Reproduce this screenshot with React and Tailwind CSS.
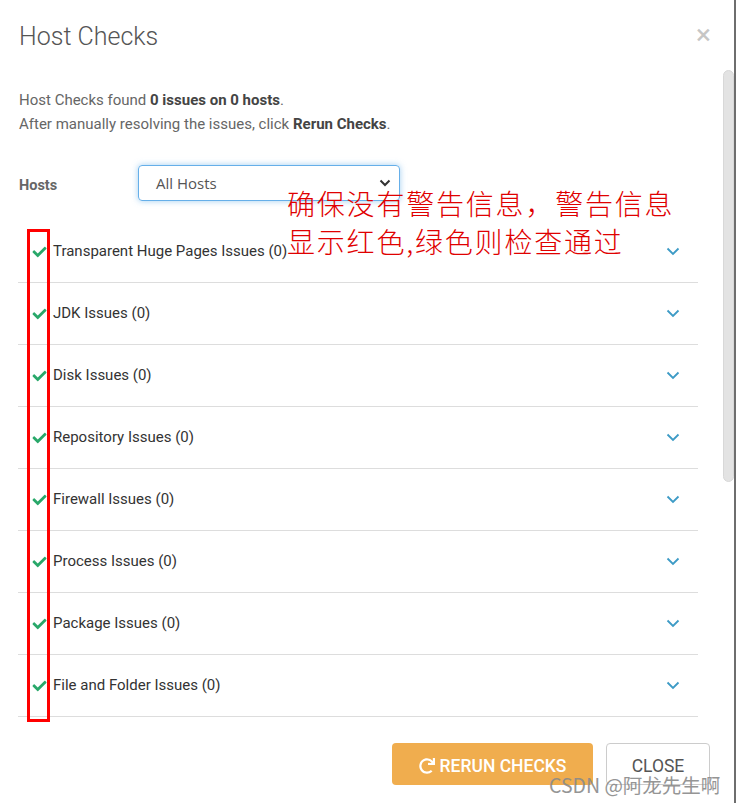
import React from "react";
import { FaCheck, FaRedo } from "react-icons/fa";

const rows = [
  "Transparent Huge Pages Issues (0)",
  "JDK Issues (0)",
  "Disk Issues (0)",
  "Repository Issues (0)",
  "Firewall Issues (0)",
  "Process Issues (0)",
  "Package Issues (0)",
  "File and Folder Issues (0)",
];

function Chevron() {
  return (
    <svg width="14" height="9" viewBox="0 0 14 9" className="shrink-0">
      <polyline points="1.5,1.5 7,7 12.5,1.5" fill="none" stroke="#3d9bc6" strokeWidth="1.8" />
    </svg>
  );
}

export default function App() {
  return (
    <div className="relative w-[736px] h-[803px] bg-white overflow-hidden flex font-['Roboto',sans-serif]">
      <div className="flex-1 flex flex-col">
        <div className="flex items-start justify-between pl-[19px] pr-[11px] pt-[21px]">
          <h1 className="text-[25px] leading-[32px] font-light text-[#555]">Host Checks</h1>
          <span className="text-[28px] leading-[24px] mt-[2px] text-[#c6c6c6]">×</span>
        </div>
        <div className="pl-[19px] pr-[24px] pt-[35px] text-[15px] leading-[24px] text-[#666]">
          <p>
            Host Checks found <b className="text-[#444] font-bold">0 issues on 0 hosts</b>.
          </p>
          <p>
            After manually resolving the issues, click <b className="text-[#444] font-bold">Rerun Checks</b>.
          </p>
        </div>
        <div className="flex items-center pl-[19px] pt-[29px]">
          <span className="w-[119px] text-[14.5px] font-bold text-[#666] mt-[6px]">Hosts</span>
          <div className="w-[262px] h-[36px] rounded-[4px] border border-[#66afe9] shadow-[0_0_6px_rgba(102,175,233,0.6)] flex items-center justify-between pl-[17px] pr-[8px]">
            <span className="text-[15px] text-[#555] font-['Open_Sans',sans-serif]">All Hosts</span>
            <svg width="12" height="8" viewBox="0 0 12 8">
              <polyline points="1.5,1.5 6,6 10.5,1.5" fill="none" stroke="#333" strokeWidth="2" />
            </svg>
          </div>
        </div>
        <div className="ml-[18px] mr-[24px] mt-[20px] flex flex-col">
          {rows.map((r) => (
            <div key={r} className="h-[62px] flex items-center border-b border-[#dddddd]">
              <FaCheck className="ml-[14px] mr-[6px] text-[#29a86a] w-[15px] h-[14px]" />
              <span className="flex-1 text-[15px] text-[#333]">{r}</span>
              <div className="mr-[18px]">
                <Chevron />
              </div>
            </div>
          ))}
        </div>
        <div className="flex justify-end gap-[13px] pr-[12px] mt-[26px]">
          <button className="w-[201px] h-[42px] pt-[4px] rounded-[4px] bg-[#f0ad4e] text-white text-[17.5px] font-medium flex items-center justify-center gap-[5px]">
            <FaRedo className="w-[16px] h-[16px]" />
            RERUN CHECKS
          </button>
          <button className="w-[104px] h-[42px] pt-[4px] rounded-[4px] border border-[#ccc] bg-white text-[#555] text-[17.5px] flex items-center justify-center">
            CLOSE
          </button>
        </div>
      </div>
      <div className="w-[14px] flex">
        <div className="w-[11px] ml-[1px] pt-[70px]">
          <div className="h-[412px] rounded-full bg-[#e3e3e3] border border-[#d8d8d8]" />
        </div>
        <div className="w-[2px] ml-auto bg-[#6e6e6e]" />
      </div>

      {/* annotation overlays */}
      <div className="absolute left-[27px] top-[229px] w-[23px] h-[493px] border-[3px] border-[#ff0000]" />
      <div className="absolute left-[287px] top-[184px] text-[#e00000] text-[28px] leading-[38px] tracking-[1.8px] font-['Noto_Sans_CJK_SC',sans-serif] font-light">
        <div>确保没有警告信息，警告信息</div>
        <div>显示红色,绿色则检查通过</div>
      </div>
      <div className="absolute left-[549px] top-[772px] text-[#8a8a8a] text-[19.5px] leading-[26px] font-['Noto_Sans_CJK_SC',sans-serif] opacity-90">
        CSDN @阿龙先生啊
      </div>
    </div>
  );
}
